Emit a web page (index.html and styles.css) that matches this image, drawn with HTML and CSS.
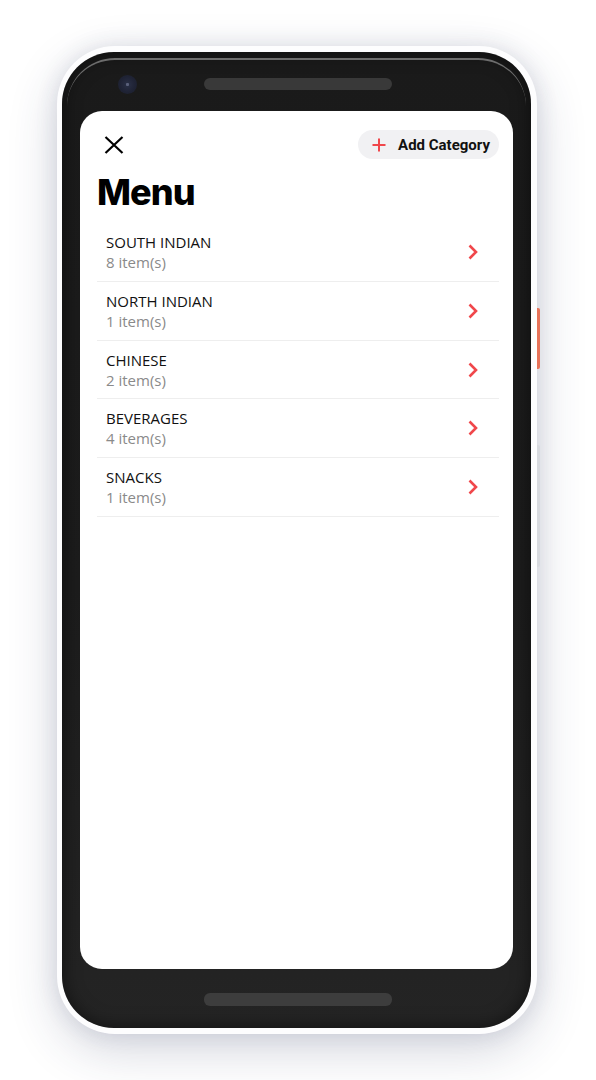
FILE: index.html
```html
<!DOCTYPE html>
<html lang="en">
<head>
<meta charset="utf-8">
<title>Menu</title>
<link rel="stylesheet" href="styles.css">
</head>
<body>
<div class="stage">
  <div class="phone">
    <span class="side-btn power"></span>
    <span class="side-btn volume"></span>
    <div class="body">
      <div class="bezel-top">
        <span class="camera"><span class="lens"></span></span>
        <span class="speaker"></span>
      </div>
      <div class="screen">
        <div class="header">
          <button class="close" aria-label="Close">
            <svg width="20" height="18" viewBox="0 0 20 18"><path d="M1.5 1 L18.5 17 M18.5 1 L1.5 17" stroke="#000" stroke-width="2.2" fill="none"/></svg>
          </button>
          <button class="add-btn">
            <svg width="14" height="14" viewBox="0 0 14 14"><path d="M7 0.5 V13.5 M0.5 7 H13.5" stroke="#f0474b" stroke-width="2" fill="none"/></svg>
            <span>Add Category</span>
          </button>
        </div>
        <h1 class="title">Menu</h1>
        <ul class="list">
          <li class="row"><div class="info"><div class="name">SOUTH INDIAN</div><div class="count">8 item(s)</div></div><svg class="chev" width="10" height="16" viewBox="0 0 10 16"><path d="M1.5 1.5 L8 8 L1.5 14.5" stroke="#f0474b" stroke-width="2.6" fill="none"/></svg></li>
          <li class="row"><div class="info"><div class="name">NORTH INDIAN</div><div class="count">1 item(s)</div></div><svg class="chev" width="10" height="16" viewBox="0 0 10 16"><path d="M1.5 1.5 L8 8 L1.5 14.5" stroke="#f0474b" stroke-width="2.6" fill="none"/></svg></li>
          <li class="row"><div class="info"><div class="name">CHINESE</div><div class="count">2 item(s)</div></div><svg class="chev" width="10" height="16" viewBox="0 0 10 16"><path d="M1.5 1.5 L8 8 L1.5 14.5" stroke="#f0474b" stroke-width="2.6" fill="none"/></svg></li>
          <li class="row"><div class="info"><div class="name">BEVERAGES</div><div class="count">4 item(s)</div></div><svg class="chev" width="10" height="16" viewBox="0 0 10 16"><path d="M1.5 1.5 L8 8 L1.5 14.5" stroke="#f0474b" stroke-width="2.6" fill="none"/></svg></li>
          <li class="row"><div class="info"><div class="name">SNACKS</div><div class="count">1 item(s)</div></div><svg class="chev" width="10" height="16" viewBox="0 0 10 16"><path d="M1.5 1.5 L8 8 L1.5 14.5" stroke="#f0474b" stroke-width="2.6" fill="none"/></svg></li>
        </ul>
      </div>
      <div class="bezel-bottom">
        <span class="speaker bottom"></span>
      </div>
    </div>
  </div>
</div>
</body>
</html>
```

FILE: styles.css
```css
* { box-sizing: border-box; }
html, body { margin: 0; padding: 0; background: #ffffff; }
body { width: 596px; height: 1080px; overflow: hidden; font-family: "Open Sans", "Liberation Sans", sans-serif; }

.stage { padding: 46px 0 0 57px; }

.phone {
  position: relative;
  width: 480px;
  height: 988px;
  padding: 6px 6px 6px 5px;
  border-radius: 58px;
  background: #fdfdfe;
  box-shadow: 0 16px 50px rgba(40, 52, 90, 0.2), 0 0 22px rgba(40, 52, 90, 0.12);
}

.side-btn { position: absolute; right: -3px; width: 3px; border-radius: 0 2px 2px 0; }
.side-btn.power { top: 262px; height: 61px; background: #e8735a; }
.side-btn.volume { top: 399px; height: 122px; background: #d8dadf; }

.body {
  position: relative;
  height: 976px;
  border-radius: 52px;
  background: linear-gradient(#1a1a1a, #1c1c1c 55%, #242424);
  box-shadow: inset 0 0 18px rgba(0, 0, 0, 0.55);
  display: flex;
  flex-direction: column;
}
.body::before {
  content: "";
  position: absolute;
  top: 6px; left: 5px; right: 5px;
  height: 70px;
  border-top: 2px solid #6d6d6d;
  border-radius: 48px 48px 0 0;
  pointer-events: none;
}

.bezel-top {
  height: 59px;
  display: flex;
  align-items: flex-start;
  padding: 23px 0 0 56px;
}
.camera {
  width: 19px; height: 19px; border-radius: 50%;
  background: radial-gradient(circle, #2a3046 0%, #1f2335 55%, #1b1e2b 100%);
  display: flex; align-items: center; justify-content: center;
}
.lens { width: 3px; height: 3px; background: #5a607a; border-radius: 1px; }
.speaker {
  width: 188px; height: 12px; border-radius: 6px;
  background: #393939;
  margin: 3px 0 0 67px;
}

.screen {
  flex: none;
  height: 858px;
  margin: 0 18px;
  border-radius: 22px;
  background: #ffffff;
  padding: 19px 14px 0 17px;
}

.bezel-bottom {
  flex: 1;
  display: flex;
  justify-content: center;
  padding: 24px 0 0 3px;
}
.speaker.bottom { margin: 0; height: 13px; background: #3d3d3d; }

.header {
  height: 29px;
  display: flex;
  align-items: center;
  justify-content: space-between;
}
button { border: 0; background: none; padding: 0; font: inherit; cursor: pointer; }
.close { display: flex; padding-left: 7px; }
.add-btn {
  height: 29px;
  display: flex;
  align-items: center;
  gap: 12px;
  padding: 0 9px 0 14px;
  border-radius: 15px;
  background: #f1f1f3;
  font-family: Roboto, "Liberation Sans", sans-serif;
  font-weight: 700;
  font-size: 15px;
  color: #111;
}

.title {
  margin: 11px 0 0 0;
  font-family: Inter, "Liberation Sans", sans-serif;
  font-weight: 800;
  font-size: 36px;
  line-height: 44px;
  color: #000;
  letter-spacing: -0.9px;
}

.list { list-style: none; margin: 9px 0 0 0; padding: 0; }
.row {
  display: flex;
  align-items: center;
  justify-content: space-between;
  padding: 9px 21px 8.75px 9px;
  border-bottom: 1px solid #eeeeee;
}
.name { font-size: 15px; line-height: 20px; color: #111; }
.count { font-size: 15px; line-height: 20px; color: #8a8a8a; }
.chev { display: block; }
```
